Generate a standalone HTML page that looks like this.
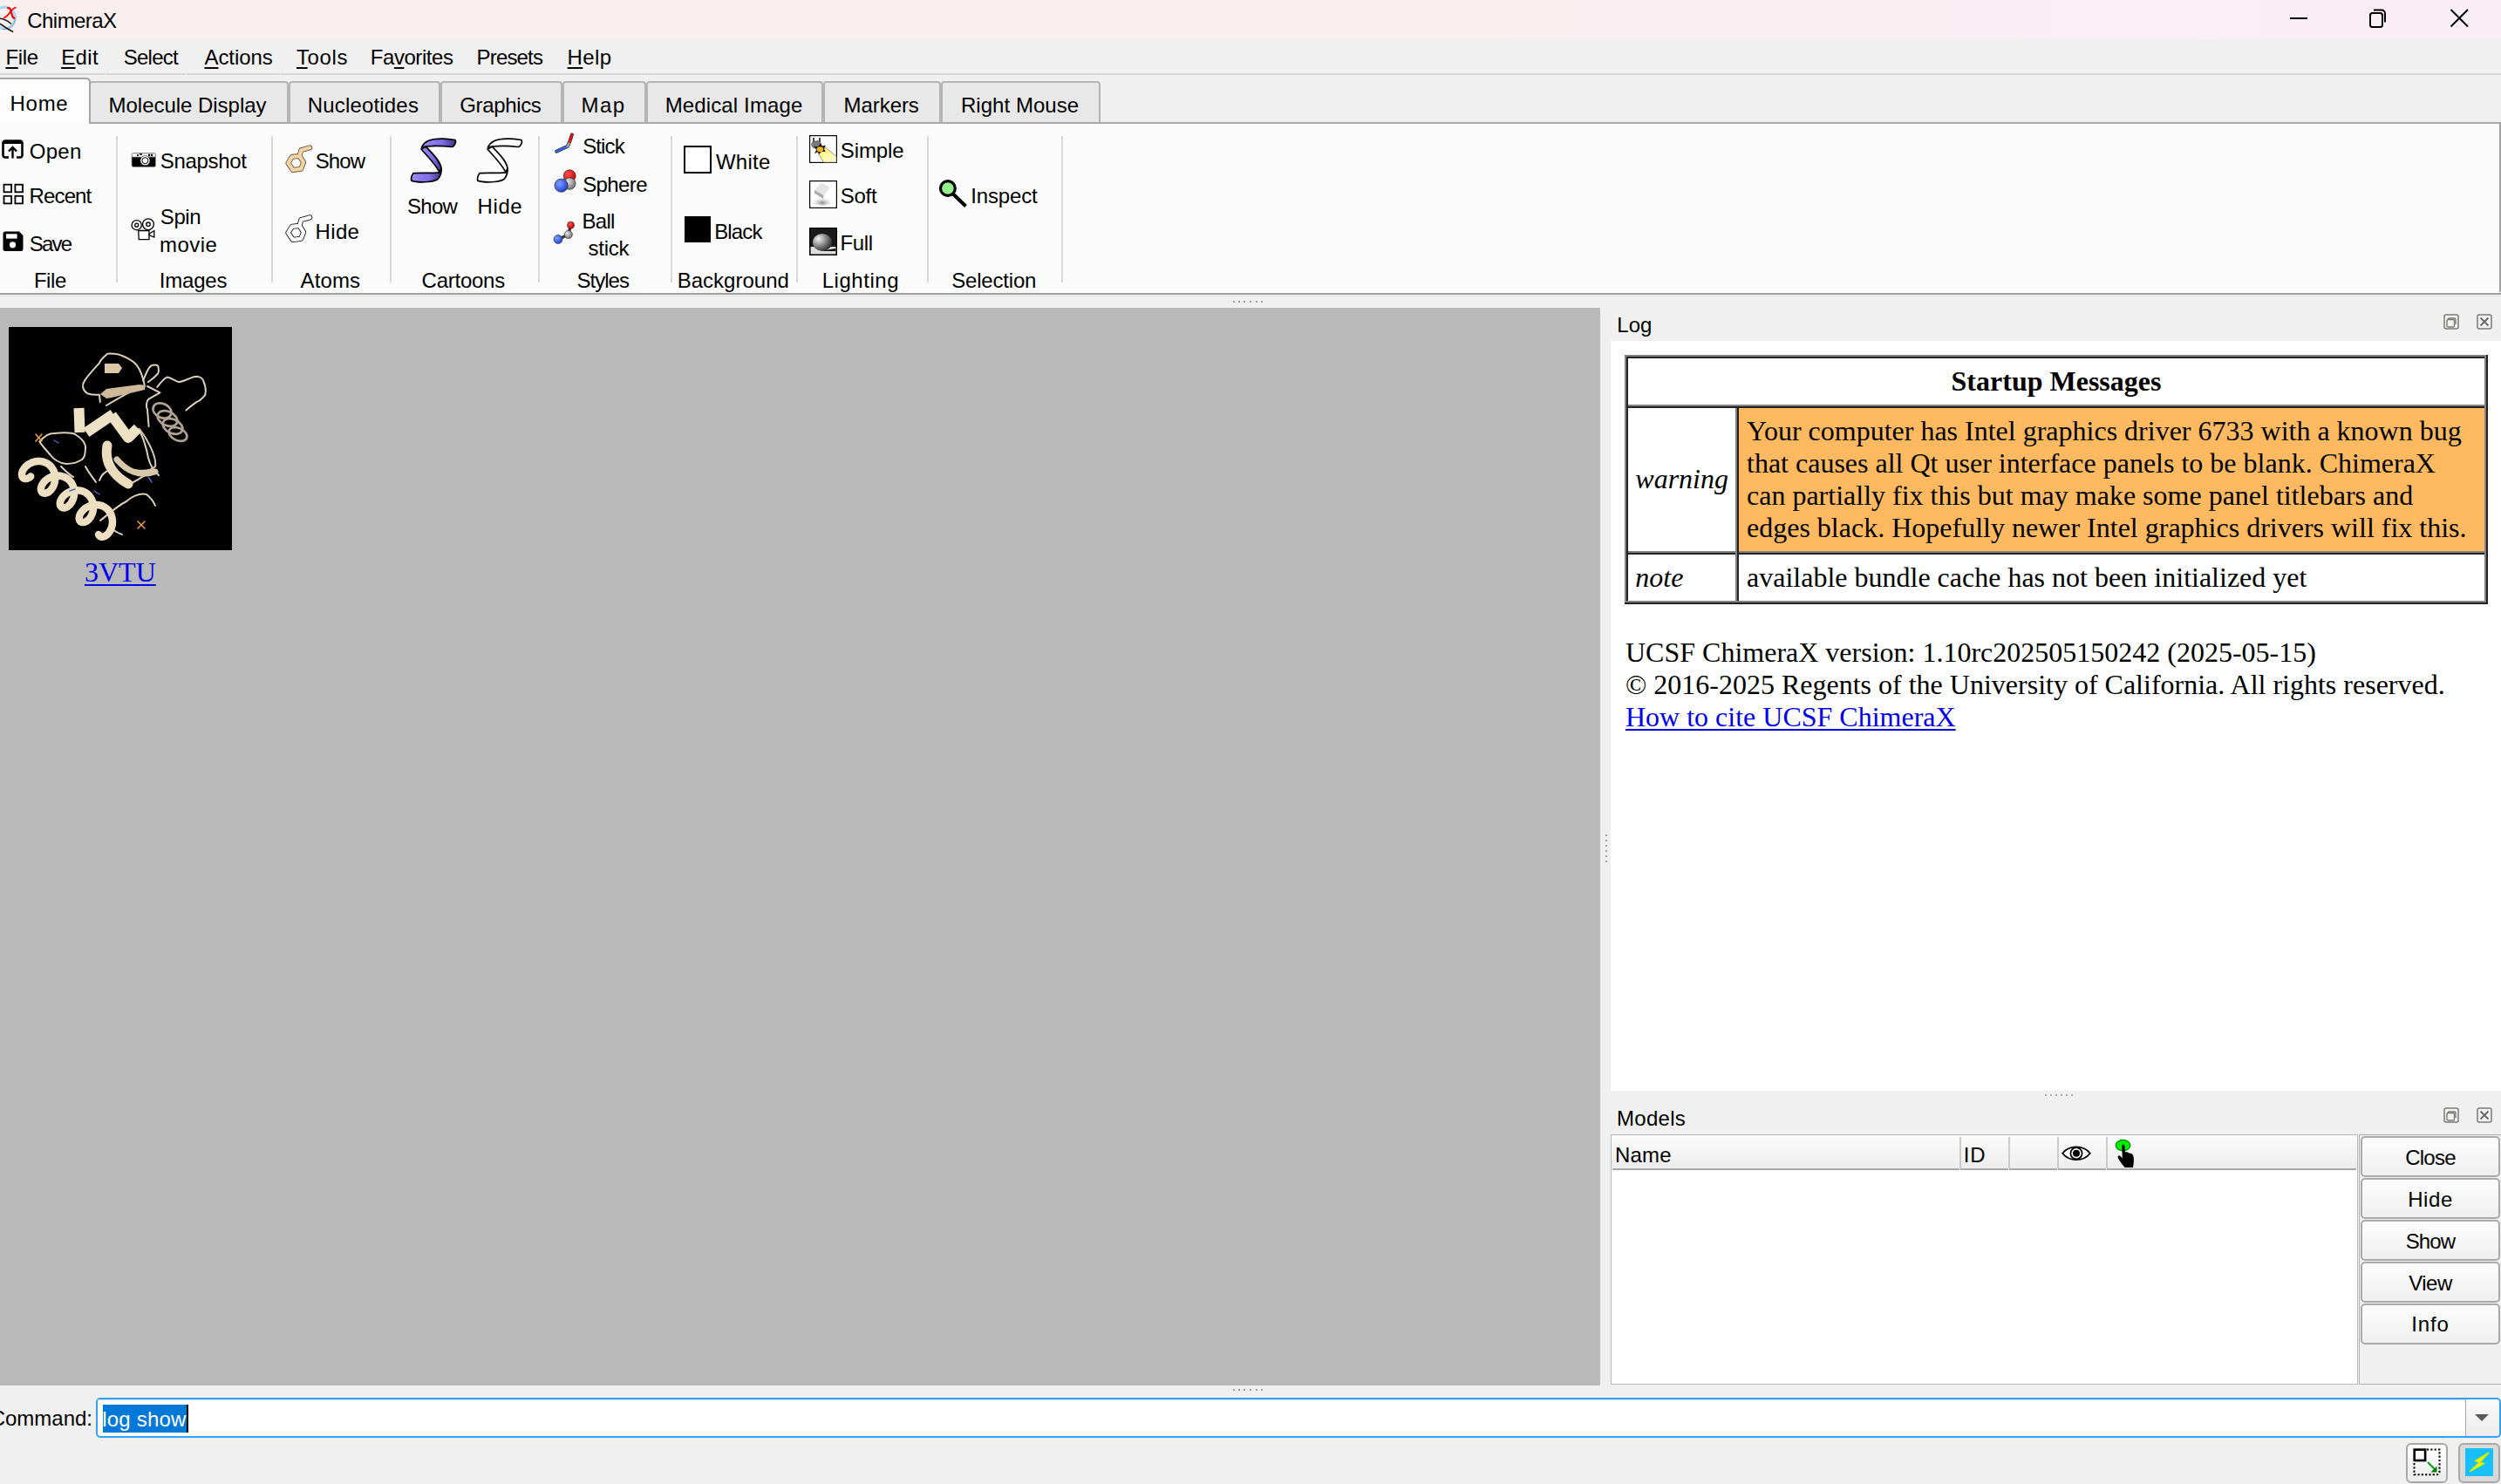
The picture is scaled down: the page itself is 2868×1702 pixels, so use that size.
<!DOCTYPE html>
<html><head><meta charset="utf-8"><title>ChimeraX</title>
<style>
html,body{margin:0;padding:0;width:2868px;height:1702px;overflow:hidden;background:#f0f0f0}
body>div,body>svg{position:absolute}
.t{position:absolute;line-height:1;white-space:nowrap;color:#000}
u{text-decoration:underline;text-decoration-thickness:2px;text-underline-offset:3px}
</style></head><body>
<div style="left:0px;top:0px;width:2868px;height:45px;background:linear-gradient(90deg,#f9efee 0%,#f9eff0 50%,#f9eef5 100%)"></div><svg style="position:absolute;left:0px;top:0px;overflow:visible" width="30" height="45" viewBox="0 0 30 45">
<circle cx="5" cy="20.5" r="12.4" fill="none" stroke="#a9d8f2" stroke-width="3.2"/>
<path d="M17.2 19.3 A12.6 12.6 0 0 1 3 33.5" fill="none" stroke="#6d7b84" stroke-width="0.8" opacity="0.7"/>
<path d="M0 21.3 C5 21.5 9 24 13 27.5" fill="none" stroke="#1a1a1a" stroke-width="1.6"/>
<path d="M0 27.2 C4 30 9 33.5 15.2 36.6" fill="none" stroke="#1a1a1a" stroke-width="1.6"/>
<path d="M4.2 20.6 C7.5 19.5 10 16.5 12.3 13 C14.5 10 16 8.8 18.5 8.5" fill="none" stroke="#f00" stroke-width="1.7"/>
<path d="M8.2 9.4 C10 8.8 11.3 9.2 11.9 11 L14.4 19 C15 20.4 16 20.9 17 20.8" fill="none" stroke="#f00" stroke-width="2.3"/>
</svg><div class="t" style="left:31.30px;top:11.60px;font-size:24px;font-family:'Liberation Sans', sans-serif;;letter-spacing:-0.557px">ChimeraX</div><svg style="position:absolute;left:2620px;top:5px;overflow:visible" width="30" height="35" viewBox="0 0 30 35"><line x1="6" y1="16" x2="26" y2="16" stroke="#000" stroke-width="2"/></svg><svg style="position:absolute;left:2710px;top:5px;overflow:visible" width="35" height="35" viewBox="0 0 35 35"><rect x="8" y="10" width="14" height="16" rx="2.5" fill="none" stroke="#000" stroke-width="2"/>
<path d="M12 6.5 h9 a4 4 0 0 1 4 4 v10" fill="none" stroke="#000" stroke-width="2"/></svg><svg style="position:absolute;left:2805px;top:5px;overflow:visible" width="35" height="35" viewBox="0 0 35 35"><path d="M5.5 6 L25 25.5 M25 6 L5.5 25.5" stroke="#000" stroke-width="1.9"/></svg><div style="left:0px;top:45px;width:2868px;height:97px;background:#f0f0f0"></div><div style="left:0px;top:84px;width:2868px;height:2px;background:#d6d6d6"></div><div style="left:121px;top:84px;width:1px;height:2px;background:#efefef"></div><div style="left:213px;top:84px;width:1px;height:2px;background:#efefef"></div><div style="left:321px;top:84px;width:1px;height:2px;background:#efefef"></div><div class="t" style="left:6.40px;top:53.60px;font-size:24px;font-family:'Liberation Sans', sans-serif;;letter-spacing:-0.333px"><u>F</u>ile</div><div class="t" style="left:70.20px;top:53.60px;font-size:24px;font-family:'Liberation Sans', sans-serif;;letter-spacing:0.333px"><u>E</u>dit</div><div class="t" style="left:141.70px;top:53.60px;font-size:24px;font-family:'Liberation Sans', sans-serif;;letter-spacing:-0.740px">Select</div><div class="t" style="left:234.50px;top:53.60px;font-size:24px;font-family:'Liberation Sans', sans-serif;;letter-spacing:-0.083px"><u>A</u>ctions</div><div class="t" style="left:340.00px;top:53.60px;font-size:24px;font-family:'Liberation Sans', sans-serif;;letter-spacing:0.600px"><u>T</u>ools</div><div class="t" style="left:424.80px;top:53.60px;font-size:24px;font-family:'Liberation Sans', sans-serif;;letter-spacing:-0.450px">Fa<u>v</u>orites</div><div class="t" style="left:546.60px;top:53.60px;font-size:24px;font-family:'Liberation Sans', sans-serif;;letter-spacing:-0.833px">Presets</div><div class="t" style="left:650.60px;top:53.60px;font-size:24px;font-family:'Liberation Sans', sans-serif;;letter-spacing:0.400px"><u>H</u>elp</div><div style="left:102px;top:93px;width:229px;height:49px;background:#e8e8e8;border:2px solid #b4b4b4;border-bottom:none;border-radius:4px 4px 0 0;box-sizing:border-box"></div><div class="t" style="left:124.60px;top:108.60px;font-size:24px;font-family:'Liberation Sans', sans-serif;;letter-spacing:-0.033px">Molecule Display</div><div style="left:331px;top:93px;width:174px;height:49px;background:#e8e8e8;border:2px solid #b4b4b4;border-bottom:none;border-radius:4px 4px 0 0;box-sizing:border-box"></div><div class="t" style="left:352.70px;top:108.60px;font-size:24px;font-family:'Liberation Sans', sans-serif;;letter-spacing:0.180px">Nucleotides</div><div style="left:505px;top:93px;width:140px;height:49px;background:#e8e8e8;border:2px solid #b4b4b4;border-bottom:none;border-radius:4px 4px 0 0;box-sizing:border-box"></div><div class="t" style="left:527.30px;top:108.60px;font-size:24px;font-family:'Liberation Sans', sans-serif;;letter-spacing:-0.357px">Graphics</div><div style="left:645px;top:93px;width:96px;height:49px;background:#e8e8e8;border:2px solid #b4b4b4;border-bottom:none;border-radius:4px 4px 0 0;box-sizing:border-box"></div><div class="t" style="left:666.60px;top:108.60px;font-size:24px;font-family:'Liberation Sans', sans-serif;;letter-spacing:1.400px">Map</div><div style="left:741px;top:93px;width:203px;height:49px;background:#e8e8e8;border:2px solid #b4b4b4;border-bottom:none;border-radius:4px 4px 0 0;box-sizing:border-box"></div><div class="t" style="left:762.70px;top:108.60px;font-size:24px;font-family:'Liberation Sans', sans-serif;;letter-spacing:0.133px">Medical Image</div><div style="left:944px;top:93px;width:135px;height:49px;background:#e8e8e8;border:2px solid #b4b4b4;border-bottom:none;border-radius:4px 4px 0 0;box-sizing:border-box"></div><div class="t" style="left:967.50px;top:108.60px;font-size:24px;font-family:'Liberation Sans', sans-serif;;letter-spacing:-0.050px">Markers</div><div style="left:1079px;top:93px;width:183px;height:49px;background:#e8e8e8;border:2px solid #b4b4b4;border-bottom:none;border-radius:4px 4px 0 0;box-sizing:border-box"></div><div class="t" style="left:1101.90px;top:108.60px;font-size:24px;font-family:'Liberation Sans', sans-serif;;letter-spacing:0.050px">Right Mouse</div><div style="left:102px;top:140px;width:2766px;height:2px;background:#a9a9a9"></div><div style="left:0px;top:89px;width:104px;height:53px;background:#fdfdfd;border:2px solid #a6a6a6;border-left:none;border-bottom:none;border-radius:0 5px 0 0;box-sizing:border-box"></div><div class="t" style="left:11.50px;top:106.60px;font-size:24px;font-family:'Liberation Sans', sans-serif;;letter-spacing:0.733px">Home</div><div style="left:0px;top:142px;width:2868px;height:196px;background:#fbfbfb"></div><div style="left:2866px;top:140px;width:2px;height:198px;background:#a3a3a3"></div><div style="left:0px;top:335px;width:2868px;height:1px;background:#ffffff"></div><div style="left:0px;top:336px;width:2868px;height:2px;background:#a3a3a3"></div><div style="left:133px;top:156px;width:2px;height:168px;background:#d9d9d9"></div><div style="left:311px;top:156px;width:2px;height:168px;background:#d9d9d9"></div><div style="left:447px;top:156px;width:2px;height:168px;background:#d9d9d9"></div><div style="left:617px;top:156px;width:2px;height:168px;background:#d9d9d9"></div><div style="left:769px;top:156px;width:2px;height:168px;background:#d9d9d9"></div><div style="left:913px;top:156px;width:2px;height:168px;background:#d9d9d9"></div><div style="left:1063px;top:156px;width:2px;height:168px;background:#d9d9d9"></div><div style="left:1217px;top:156px;width:2px;height:168px;background:#d9d9d9"></div><div class="t" style="left:38.90px;top:310.10px;font-size:24px;font-family:'Liberation Sans', sans-serif;;letter-spacing:-0.433px">File</div><div class="t" style="left:182.70px;top:310.10px;font-size:24px;font-family:'Liberation Sans', sans-serif;;letter-spacing:-0.180px">Images</div><div class="t" style="left:344.60px;top:310.10px;font-size:24px;font-family:'Liberation Sans', sans-serif;;letter-spacing:0.100px">Atoms</div><div class="t" style="left:483.60px;top:310.10px;font-size:24px;font-family:'Liberation Sans', sans-serif;;letter-spacing:-0.257px">Cartoons</div><div class="t" style="left:661.60px;top:310.10px;font-size:24px;font-family:'Liberation Sans', sans-serif;;letter-spacing:-1.000px">Styles</div><div class="t" style="left:776.70px;top:310.10px;font-size:24px;font-family:'Liberation Sans', sans-serif;;letter-spacing:0.011px">Background</div><div class="t" style="left:942.70px;top:310.10px;font-size:24px;font-family:'Liberation Sans', sans-serif;;letter-spacing:0.543px">Lighting</div><div class="t" style="left:1091.20px;top:310.10px;font-size:24px;font-family:'Liberation Sans', sans-serif;;letter-spacing:-0.188px">Selection</div><svg style="position:absolute;left:2px;top:160px;overflow:visible" width="26" height="24" viewBox="0 0 26 24"><path d="M8 20.5 H4 a2.5 2.5 0 0 1 -2.5 -2.5 V4 a2.5 2.5 0 0 1 2.5 -2.5 H21 a2.5 2.5 0 0 1 2.5 2.5 V18 a2.5 2.5 0 0 1 -2.5 2.5 H17" fill="none" stroke="#000" stroke-width="2.6"/>
<rect x="1.5" y="1.5" width="22" height="3.5" fill="#000"/>
<path d="M12.5 21.5 V9.5 M8 13.5 L12.5 9 L17 13.5" fill="none" stroke="#000" stroke-width="2.4"/></svg><div class="t" style="left:33.80px;top:161.60px;font-size:24px;font-family:'Liberation Sans', sans-serif;;letter-spacing:0.267px">Open</div><svg style="position:absolute;left:2px;top:210px;overflow:visible" width="26" height="26" viewBox="0 0 26 26"><g fill="none" stroke="#000" stroke-width="1.8"><rect x="2.5" y="1.7" width="8.6" height="8.6"/><rect x="15.4" y="1.7" width="8.6" height="8.6"/><rect x="2.5" y="14.8" width="8.6" height="8.6"/><rect x="15.4" y="14.8" width="8.6" height="8.6"/></g></svg><div class="t" style="left:33.60px;top:213.30px;font-size:24px;font-family:'Liberation Sans', sans-serif;;letter-spacing:-0.880px">Recent</div><svg style="position:absolute;left:2px;top:264px;overflow:visible" width="26" height="26" viewBox="0 0 26 26"><path d="M4 1.5 H20 L24.5 6 V21.5 a2.5 2.5 0 0 1 -2.5 2.5 H4 a2.5 2.5 0 0 1 -2.5 -2.5 V4 a2.5 2.5 0 0 1 2.5 -2.5 Z" fill="#000"/>
<rect x="5" y="4.3" width="12.6" height="5.3" fill="#fff"/><circle cx="12.5" cy="16.8" r="3.6" fill="#fff"/></svg><div class="t" style="left:33.80px;top:267.60px;font-size:24px;font-family:'Liberation Sans', sans-serif;;letter-spacing:-1.767px">Save</div><svg style="position:absolute;left:149px;top:173px;overflow:visible" width="31" height="20" viewBox="0 0 31 20"><path d="M2 6 C2 3 3 2.5 6 2.5 H27 C29 2.5 29.5 3.5 29.5 6 V16.5 C29.5 18 28.5 18.5 27 18.5 H4 C2.5 18.5 2 17.5 2 16 Z" fill="#000" stroke="#999" stroke-width="0.8"/>
<path d="M2.4 3 H29 V7 H2.4 Z" fill="#fff" stroke="#999" stroke-width="0.7"/>
<rect x="8" y="4.3" width="2" height="1.6" fill="#000"/><rect x="11" y="3.2" width="3" height="1.5" fill="#000"/><rect x="21" y="3.8" width="2.2" height="2.4" fill="#000"/><rect x="24" y="3.8" width="2.2" height="2.4" fill="#000"/>
<circle cx="17.4" cy="11.2" r="5.6" fill="#fff" stroke="#000" stroke-width="0.6"/><circle cx="17.4" cy="11.2" r="3.5" fill="#fff" stroke="#000" stroke-width="1"/></svg><div class="t" style="left:183.80px;top:173.10px;font-size:24px;font-family:'Liberation Sans', sans-serif;;letter-spacing:-0.343px">Snapshot</div><svg style="position:absolute;left:149px;top:249px;overflow:visible" width="30" height="28" viewBox="0 0 30 28"><g fill="#fff" stroke="#000" stroke-width="1.3"><circle cx="7.7" cy="9.2" r="5.6"/><circle cx="7.7" cy="9.2" r="2"/><circle cx="21" cy="8.2" r="6.4"/><circle cx="21" cy="8.2" r="2.2"/>
<path d="M9.7 15.5 H22 V25.7 H10.3 Z"/><path d="M22 19.3 L27.8 15.6 V23 L22 20.5 Z"/></g></svg><div class="t" style="left:183.80px;top:237.10px;font-size:24px;font-family:'Liberation Sans', sans-serif;;letter-spacing:-0.400px">Spin</div><div class="t" style="left:183.10px;top:268.80px;font-size:24px;font-family:'Liberation Sans', sans-serif;;letter-spacing:0.425px">movie</div><svg style="position:absolute;left:322px;top:160px;overflow:visible" width="40" height="40" viewBox="0 0 40 40"><path d="M8.4 27 L13 19.8 L21.5 19 L26.1 26.1 L23.2 33.7 L13.9 35 Z M21.5 19 L23.2 12.2 L33.3 9.3" fill="none" stroke="#6b5a3f" stroke-width="6" stroke-linejoin="round" stroke-linecap="round"/>
<path d="M8.4 27 L13 19.8 L21.5 19 L26.1 26.1 L23.2 33.7 L13.9 35 Z M21.5 19 L23.2 12.2 L33.3 9.3" fill="none" stroke="#f2d5a5" stroke-width="4.2" stroke-linejoin="round" stroke-linecap="round"/></svg><div class="t" style="left:361.70px;top:173.10px;font-size:24px;font-family:'Liberation Sans', sans-serif;;letter-spacing:-0.900px">Show</div><svg style="position:absolute;left:322px;top:240px;overflow:visible" width="40" height="40" viewBox="0 0 40 40"><path d="M8.4 27 L13 19.8 L21.5 19 L26.1 26.1 L23.2 33.7 L13.9 35 Z M21.5 19 L23.2 12.2 L33.3 9.3" fill="none" stroke="#000" stroke-width="6" stroke-linejoin="round" stroke-linecap="round"/>
<path d="M8.4 27 L13 19.8 L21.5 19 L26.1 26.1 L23.2 33.7 L13.9 35 Z M21.5 19 L23.2 12.2 L33.3 9.3" fill="none" stroke="#fbfbfb" stroke-width="4.4" stroke-linejoin="round" stroke-linecap="round"/></svg><div class="t" style="left:361.50px;top:253.60px;font-size:24px;font-family:'Liberation Sans', sans-serif;;letter-spacing:0.367px">Hide</div><svg style="position:absolute;left:465px;top:150px;overflow:visible" width="60" height="62" viewBox="0 0 60 62"><defs><linearGradient id="pg" x1="0" y1="0" x2="1" y2="0"><stop offset="0" stop-color="#9d8cf6"/><stop offset="0.6" stop-color="#7f6ce8"/><stop offset="1" stop-color="#3f3383"/></linearGradient></defs><g fill="url(#pg)" stroke="#000" stroke-width="1.7" stroke-linejoin="round"><path d="M18.5 19 C22 10 35 7 57 10.5 L57.5 13 C56.5 16.5 55.5 18.5 53 18.5 C45 17.5 30 17.3 23.5 18 Z" />
<path d="M18 21 L23.5 18.2 C31 26 40 35 41 43 L39 48 C36 40 25 29 18 21 Z"/>
<path d="M39.2 47.8 C30 49 15 48 9 48.7 C7 51 6.3 54 6.7 57.1 C12 59.2 30 60 37 55.5 C40 52.5 41.6 47 41 43 Z"/></g></svg><svg style="position:absolute;left:541px;top:150px;overflow:visible" width="60" height="62" viewBox="0 0 60 62"><g fill="#fff" stroke="#000" stroke-width="1.7" stroke-linejoin="round"><path d="M18.5 19 C22 10 35 7 57 10.5 L57.5 13 C56.5 16.5 55.5 18.5 53 18.5 C45 17.5 30 17.3 23.5 18 Z" />
<path d="M18 21 L23.5 18.2 C31 26 40 35 41 43 L39 48 C36 40 25 29 18 21 Z"/>
<path d="M39.2 47.8 C30 49 15 48 9 48.7 C7 51 6.3 54 6.7 57.1 C12 59.2 30 60 37 55.5 C40 52.5 41.6 47 41 43 Z"/></g></svg><div class="t" style="left:467.00px;top:225.00px;font-size:24px;font-family:'Liberation Sans', sans-serif;;letter-spacing:-0.733px">Show</div><div class="t" style="left:547.60px;top:225.00px;font-size:24px;font-family:'Liberation Sans', sans-serif;;letter-spacing:0.567px">Hide</div><svg style="position:absolute;left:630px;top:150px;overflow:visible" width="35" height="135" viewBox="0 0 35 135"><g stroke-linecap="round">
<path d="M8.2 23.6 L20.9 17.7 L23.2 12.7 L25.9 4.5" fill="none" stroke="#333" stroke-width="4"/>
<path d="M8.2 23.6 L20.9 17.7" stroke="#3a62e8" stroke-width="2.6"/>
<path d="M20.9 17.7 L23.2 12.7" stroke="#a0a0a0" stroke-width="2.6"/>
<path d="M23.2 12.7 L25.9 4.5" stroke="#ee1010" stroke-width="2.6"/></g>
<defs><radialGradient id="gb" cx="0.35" cy="0.35" r="0.7"><stop offset="0" stop-color="#7fa0ff"/><stop offset="1" stop-color="#1f3fd0"/></radialGradient>
<radialGradient id="gr" cx="0.35" cy="0.35" r="0.7"><stop offset="0" stop-color="#ff5050"/><stop offset="1" stop-color="#d00000"/></radialGradient>
<radialGradient id="gg" cx="0.35" cy="0.35" r="0.7"><stop offset="0" stop-color="#e6e6e6"/><stop offset="1" stop-color="#707070"/></radialGradient></defs>
<circle cx="23.2" cy="51.8" r="7" fill="url(#gr)" stroke="#222" stroke-width="0.7"/>
<circle cx="23.2" cy="60.5" r="6.8" fill="url(#gg)" stroke="#222" stroke-width="0.7"/>
<circle cx="13.6" cy="62.7" r="7.6" fill="url(#gb)" stroke="#222" stroke-width="0.7"/>
<path d="M10 124.5 L21.8 119 L24.5 108.2" fill="none" stroke="#333" stroke-width="3.2"/>
<circle cx="24.5" cy="108.2" r="4" fill="url(#gr)" stroke="#222" stroke-width="0.6"/>
<circle cx="21.8" cy="119" r="4.6" fill="url(#gg)" stroke="#222" stroke-width="0.6"/>
<circle cx="10" cy="124.5" r="5" fill="url(#gb)" stroke="#222" stroke-width="0.6"/></svg><div class="t" style="left:668.20px;top:155.60px;font-size:24px;font-family:'Liberation Sans', sans-serif;;letter-spacing:-0.875px">Stick</div><div class="t" style="left:668.20px;top:200.10px;font-size:24px;font-family:'Liberation Sans', sans-serif;;letter-spacing:-0.600px">Sphere</div><div class="t" style="left:667.50px;top:242.30px;font-size:24px;font-family:'Liberation Sans', sans-serif;;letter-spacing:-0.700px">Ball</div><div class="t" style="left:674.60px;top:273.20px;font-size:24px;font-family:'Liberation Sans', sans-serif;;letter-spacing:-0.275px">stick</div><div style="left:784px;top:167px;width:32px;height:32px;background:#fff;border:2px solid #000;box-sizing:border-box"></div><div class="t" style="left:820.90px;top:173.60px;font-size:24px;font-family:'Liberation Sans', sans-serif;;letter-spacing:0.275px">White</div><div style="left:785px;top:248px;width:30px;height:30px;background:#000"></div><div class="t" style="left:819.20px;top:253.60px;font-size:24px;font-family:'Liberation Sans', sans-serif;;letter-spacing:-0.850px">Black</div><svg style="position:absolute;left:928px;top:155px;overflow:visible" width="32" height="32" viewBox="0 0 32 32"><rect x="0.6" y="0.6" width="30.8" height="30.8" fill="#fff" stroke="#000" stroke-width="1.2"/>
<defs><linearGradient id="ly" x1="0" y1="0" x2="1" y2="1"><stop offset="0" stop-color="#fff060"/><stop offset="1" stop-color="#fffde0"/></linearGradient></defs>
<path d="M9.4 19.3 L18.5 14.3 L31.2 24.4 V31.2 H16.5 Z" fill="url(#ly)" stroke="#333" stroke-width="0.5"/>
<path d="M5 3 V9 M12 3 V8.5" stroke="#222" stroke-width="1.6"/>
<path d="M3 9 C2 11 3 14 6 15 L14 12 L12.5 7 C9 6 5 7 3 9 Z" fill="#7a7a7a" stroke="#333" stroke-width="0.5"/>
<path d="M6 21.5 L8 17 L5.5 13 L10 13 L13 9.5 L15 12.5 L19 11.5 L17 15.5 L18.5 19 L14 19 L11 22 L10 19 Z" fill="#1a1a1a"/>
<ellipse cx="12.4" cy="16.3" rx="3.8" ry="3" fill="#f5b21c"/></svg><div class="t" style="left:963.80px;top:161.40px;font-size:24px;font-family:'Liberation Sans', sans-serif;;letter-spacing:-0.120px">Simple</div><svg style="position:absolute;left:928px;top:207px;overflow:visible" width="32" height="32" viewBox="0 0 32 32"><defs><radialGradient id="sh" cx="0.5" cy="0.75" r="0.5"><stop offset="0" stop-color="#888"/><stop offset="1" stop-color="#fff" stop-opacity="0"/></radialGradient></defs>
<rect x="0.6" y="0.6" width="30.8" height="30.8" fill="#fff" stroke="#000" stroke-width="1.2"/>
<ellipse cx="15" cy="22" rx="14" ry="7" fill="url(#sh)"/>
<path d="M6 11 L14 2.5 L24 8 L16.5 17 Z" fill="#e4e4e4"/>
<path d="M6 11 L16.5 17 L16 21 L6 14.5 Z" fill="#aaa"/></svg><div class="t" style="left:963.80px;top:213.30px;font-size:24px;font-family:'Liberation Sans', sans-serif;;letter-spacing:-0.300px">Soft</div><svg style="position:absolute;left:928px;top:261px;overflow:visible" width="32" height="32" viewBox="0 0 32 32"><defs><radialGradient id="ap" cx="0.3" cy="0.3" r="0.8"><stop offset="0" stop-color="#f4f4f4"/><stop offset="0.5" stop-color="#888"/><stop offset="1" stop-color="#222"/></radialGradient></defs>
<rect x="0.6" y="0.6" width="30.8" height="30.8" fill="#1a1a1a" stroke="#000" stroke-width="1.2"/>
<path d="M1.6 22 H30.4 V30.4 H1.6 Z" fill="#ddd"/>
<path d="M12 27 L30.4 27 V24 Z" fill="#111"/>
<ellipse cx="15" cy="17" rx="11" ry="10" fill="url(#ap)"/></svg><div class="t" style="left:963.50px;top:267.20px;font-size:24px;font-family:'Liberation Sans', sans-serif;;letter-spacing:-0.333px">Full</div><svg style="position:absolute;left:1076px;top:205px;overflow:visible" width="36" height="36" viewBox="0 0 36 36"><circle cx="10.9" cy="11" r="8.4" fill="#93f28f" stroke="#000" stroke-width="3.2"/>
<path d="M17 17.5 L31.5 31.5" stroke="#000" stroke-width="4"/></svg><div class="t" style="left:1113.20px;top:213.30px;font-size:24px;font-family:'Liberation Sans', sans-serif;;letter-spacing:-0.133px">Inspect</div><div style="left:0px;top:338px;width:2868px;height:15px;background:#f0f0f0"></div><div style="left:0px;top:339px;width:2868px;height:1px;background:#e2e2e2"></div><div style="left:1414px;top:345px;width:2px;height:2px;background:#a0a0a0"></div><div style="left:1420px;top:345px;width:2px;height:2px;background:#a0a0a0"></div><div style="left:1426px;top:345px;width:2px;height:2px;background:#a0a0a0"></div><div style="left:1433px;top:345px;width:2px;height:2px;background:#a0a0a0"></div><div style="left:1440px;top:345px;width:2px;height:2px;background:#a0a0a0"></div><div style="left:1446px;top:345px;width:2px;height:2px;background:#a0a0a0"></div><div style="left:0px;top:353px;width:1835px;height:1236px;background:#b9b9b9"></div><div style="left:1835px;top:353px;width:1033px;height:1236px;background:#f0f0f0"></div><div style="left:1841px;top:957px;width:2px;height:2px;background:#a0a0a0"></div><div style="left:1841px;top:963px;width:2px;height:2px;background:#a0a0a0"></div><div style="left:1841px;top:969px;width:2px;height:2px;background:#a0a0a0"></div><div style="left:1841px;top:975px;width:2px;height:2px;background:#a0a0a0"></div><div style="left:1841px;top:981px;width:2px;height:2px;background:#a0a0a0"></div><div style="left:1841px;top:987px;width:2px;height:2px;background:#a0a0a0"></div><svg style="position:absolute;left:10px;top:375px;overflow:visible" width="256" height="256" viewBox="0 0 256 256"><rect width="256" height="256" fill="#000"/>
<g fill="none" stroke-linecap="round" stroke-linejoin="round">
<g stroke="#ddd0b8" stroke-width="2">
<path d="M155.7 66.5 C154 58 150 48 146.8 43.8 C142 38 128 31 122.6 30.9 C118 30.5 114 30 112.9 30.9 C108 35 104 40 104 41.4 C100 46 92 54 87 61.6 C84 66 84 72 90.2 76.2 C95 78 100 78 104 77.8 L104.8 85.9"/>
<path d="M154.1 61.6 C157 54 160 47 163 44.6 C166 43 170 43 171.1 44.6 C172 48 172 52 171.1 53.5 C168 57 163 61 159.8 63.2"/>
<path d="M159 68 L173.5 75.4 L160.6 82.6 C158 85 157 90 159 95 L160.6 114"/>
<path d="M170.3 68.9 C174 64 178 59 181.6 57.6 C186 58 190 62 195.4 63.2 C202 62 210 57 215.6 56.8 C220 57 223 60 223.7 63.2 C226 68 226 74 225.3 77.8 C222 82 218 85 215.6 85.9 C210 90 206 93 203.4 95.6"/>
<path d="M112 90 C125 82 140 74 150.9 68.1"/>
<path d="M35.4 131.5 C40 126 46 122 52 122 C62 121 72 121 76 123 C84 128 88 133 88 138 C88 145 87 150 84 152 C78 156 72 157 66 157 C56 156 50 150 47 146 C42 140 38 136 35.4 131.5"/>
<path d="M105 222 C115 214 125 205 135 200 C140 195 150 190 158 192 C163 196 166 200 168 205"/>
<path d="M148 117 C155 125 158 140 160 150 C162 158 166 165 172 170"/>
<path d="M138 180 C145 178 152 172 160 168"/>
<path d="M88 160 C92 168 96 172 100 178 M104 176 C106 170 110 166 116 164"/>
<path d="M60 160 C66 166 70 170 74 172 M116 230 C120 233 124 236 130 238"/>
</g>
<g stroke="#b0a494" stroke-width="2.6">
<ellipse cx="176" cy="96" rx="11" ry="8" transform="rotate(25 176 96)"/>
<ellipse cx="182" cy="105" rx="12" ry="8" transform="rotate(25 182 105)"/>
<ellipse cx="188" cy="114" rx="12" ry="8" transform="rotate(25 188 114)"/>
<ellipse cx="194" cy="123" rx="11" ry="7" transform="rotate(25 194 123)"/>
</g>
<path d="M25.2 171.5 L24.2 172.3 L23.1 173.0 L22.0 173.5 L21.0 173.9 L20.0 174.1 L19.0 174.1 L18.1 173.9 L17.3 173.6 L16.6 173.2 L16.0 172.6 L15.6 171.8 L15.3 171.0 L15.1 170.0 L15.0 169.0 L15.1 167.8 L15.4 166.7 L15.8 165.4 L16.4 164.2 L17.2 163.0 L18.1 161.7 L19.1 160.5 L20.3 159.4 L21.6 158.3 L23.0 157.3 L24.6 156.5 L26.2 155.7 L27.9 155.0 L29.6 154.5 L31.4 154.2 L33.2 154.0 L35.1 154.0 L36.9 154.1 L38.7 154.4 L40.5 154.9 L42.1 155.5 L43.8 156.3 L45.3 157.3 L46.7 158.4 L48.0 159.6 L49.2 161.0 L50.2 162.5 L51.1 164.1 L51.9 165.7 L52.4 167.5 L52.9 169.2 L53.1 171.1 L53.3 172.9 L53.2 174.7 L53.0 176.5 L52.7 178.3 L52.2 180.0 L51.6 181.6 L50.9 183.1 L50.1 184.5 L49.2 185.8 L48.3 187.0 L47.3 188.0 L46.2 188.9 L45.1 189.6 L44.1 190.1 L43.0 190.5 L42.0 190.7 L41.1 190.7 L40.2 190.6 L39.4 190.3 L38.6 189.9 L38.0 189.3 L37.5 188.6 L37.2 187.8 L37.0 186.8 L36.9 185.8 L37.0 184.7 L37.3 183.5 L37.7 182.3 L38.2 181.0 L39.0 179.8 L39.8 178.6 L40.9 177.4 L42.0 176.2 L43.3 175.1 L44.7 174.1 L46.2 173.2 L47.8 172.5 L49.5 171.8 L51.3 171.3 L53.1 170.9 L54.9 170.7 L56.7 170.6 L58.5 170.7 L60.3 171.0 L62.1 171.5 L63.8 172.1 L65.4 172.9 L67.0 173.8 L68.4 174.9 L69.7 176.1 L70.9 177.5 L72.0 178.9 L72.9 180.5 L73.7 182.2 L74.3 183.9 L74.7 185.7 L75.0 187.5 L75.2 189.3 L75.1 191.1 L75.0 192.9 L74.6 194.7 L74.2 196.4 L73.6 198.0 L72.9 199.6 L72.1 201.0 L71.3 202.3 L70.3 203.5 L69.3 204.5 L68.3 205.4 L67.2 206.2 L66.1 206.7 L65.1 207.1 L64.1 207.4 L63.1 207.4 L62.2 207.3 L61.4 207.1 L60.6 206.6 L60.0 206.1 L59.5 205.4 L59.1 204.6 L58.9 203.6 L58.8 202.6 L58.9 201.5 L59.1 200.3 L59.5 199.1 L60.1 197.9 L60.8 196.6 L61.6 195.4 L62.6 194.2 L63.8 193.1 L65.0 192.0 L66.4 190.9 L67.9 190.0 L69.5 189.2 L71.2 188.6 L72.9 188.0 L74.7 187.6 L76.5 187.4 L78.4 187.3 L80.2 187.4 L82.0 187.6 L83.8 188.1 L85.5 188.7 L87.1 189.4 L88.7 190.3 L90.1 191.4 L91.5 192.6 L92.7 193.9 L93.8 195.4 L94.7 196.9 L95.5 198.6 L96.1 200.3 L96.6 202.1 L96.9 203.9 L97.0 205.7 L97.0 207.5 L96.9 209.3 L96.6 211.1 L96.2 212.8 L95.6 214.5 L94.9 216.0 L94.2 217.5 L93.3 218.8 L92.4 220.0 L91.4 221.1 L90.3 222.0 L89.3 222.7 L88.2 223.3 L87.1 223.7 L86.1 224.0 L85.1 224.1 L84.2 224.0 L83.4 223.8 L82.6 223.4 L82.0 222.8 L81.5 222.2 L81.1 221.3 L80.8 220.4 L80.7 219.4 L80.8 218.3 L81.0 217.2 L81.3 216.0 L81.9 214.7 L82.5 213.5 L83.4 212.3 L84.4 211.0 L85.5 209.9 L86.7 208.8 L88.1 207.8 L89.6 206.8 L91.2 206.0 L92.9 205.3 L94.6 204.7 L96.4 204.3 L98.2 204.1 L100.0 204.0 L101.8 204.0 L103.6 204.3 L105.4 204.7 L107.1 205.2 L108.8 206.0 L110.4 206.9 L111.8 207.9 L113.2 209.1 L114.4 210.4 L115.5 211.8 L116.5 213.4 L117.3 215.0 L117.9 216.7 L118.4 218.5 L118.8 220.3 L118.9 222.1 L119.0 223.9 L118.8 225.7 L118.6 227.5 L118.1 229.2 L117.6 230.9 L116.9 232.5 L116.2 233.9 L115.3 235.3 L114.4 236.5 L113.4 237.6 L112.4 238.5 L111.3 239.3 L110.3 239.9 L109.2 240.4 L108.2 240.6 L107.2 240.8 L106.3 240.7 L105.4 240.5 L104.6 240.1 L104.0 239.6 L103.5 238.9 L103.0 238.1" stroke="#eddfc2" stroke-width="8.5"/>
<g stroke="#eee2c6" stroke-width="12" stroke-linecap="butt">
<path d="M80.5 93 L81.5 121"/>
<path d="M89 121 L120 100"/>
<path d="M118 101 L137 127 L148 116"/>
</g>
<path d="M113 136 C110 152 116 168 137 180" stroke="#eadcbf" stroke-width="11"/>
<path d="M124 152 C135 165 150 172 168 166" stroke="#d8c8aa" stroke-width="7"/>
<path d="M150 117 C160 130 170 150 168 160 C160 168 140 165 128 158" stroke="#d6c9b3" stroke-width="2"/>
<path d="M110 42 L126 42 L130 47 L126 53 L110 53 Z" fill="#dcc8a6"/>
<path d="M105 77 L112 71 L150 66 L157 67 L156 72 L118 81 L112 82 Z" fill="#cdb99a"/>
<g stroke="#f0a040" stroke-width="1.5">
<path d="M148 223 L156 231 M156 223 L148 231"/>
<path d="M31 123 L38 131 M38 123 L31 131"/>
</g>
<g stroke="#4a6ad0" stroke-width="1.4">
<path d="M52 130 L57 133 M98 188 L104 192 M160 172 L164 178 M70 188 L76 186"/>
</g>
</g></svg><div class="t" style="left:97.00px;top:640.20px;font-size:32px;font-family:'Liberation Serif', serif;color:#0000ee"><u>3VTU</u></div><div class="t" style="left:1854.20px;top:360.60px;font-size:24px;font-family:'Liberation Sans', sans-serif;;letter-spacing:0.100px">Log</div><svg style="position:absolute;left:2800px;top:358px;overflow:visible" width="22" height="22" viewBox="0 0 22 22"><rect x="3" y="3" width="16" height="16" rx="2" fill="#f3f3f3" stroke="#7a7a78" stroke-width="1.5"/>
<path d="M7 8.5 C7 7.5 7.5 7 8.5 7 H14.5 C15.5 7 16 7.5 16 8.5 V14" fill="none" stroke="#7a7a78" stroke-width="1.4"/>
<rect x="6" y="8.5" width="8.5" height="8.5" rx="1.2" fill="#f3f3f3" stroke="#7a7a78" stroke-width="1.4"/></svg><svg style="position:absolute;left:2838px;top:358px;overflow:visible" width="22" height="22" viewBox="0 0 22 22"><rect x="3" y="3" width="16" height="16" rx="2" fill="#f3f3f3" stroke="#7a7a78" stroke-width="1.5"/>
<path d="M6.5 6.5 L15.5 15.5 M15.5 6.5 L6.5 15.5" stroke="#6c6c68" stroke-width="2"/></svg><div style="left:1847px;top:391px;width:1021px;height:860px;background:#fff"></div><div style="left:1994px;top:468px;width:855px;height:164px;background:#ffb961"></div><div class="t" style="left:1858.0px;width:1000px;text-align:center;top:421.40px;font-size:32px;font-family:'Liberation Serif', serif;font-weight:bold">Startup Messages</div><div class="t" style="left:1875.30px;top:533.20px;font-size:32px;font-family:'Liberation Serif', serif;font-style:italic">warning</div><div class="t" style="left:2003.00px;top:478.20px;font-size:32px;font-family:'Liberation Serif', serif;">Your computer has Intel graphics driver 6733 with a known bug</div><div class="t" style="left:2003.00px;top:515.00px;font-size:32px;font-family:'Liberation Serif', serif;">that causes all Qt user interface panels to be blank. ChimeraX</div><div class="t" style="left:2003.00px;top:551.80px;font-size:32px;font-family:'Liberation Serif', serif;">can partially fix this but may make some panel titlebars and</div><div class="t" style="left:2003.00px;top:588.60px;font-size:32px;font-family:'Liberation Serif', serif;">edges black. Hopefully newer Intel graphics drivers will fix this.</div><div class="t" style="left:1875.30px;top:645.50px;font-size:32px;font-family:'Liberation Serif', serif;font-style:italic">note</div><div class="t" style="left:2003.00px;top:645.50px;font-size:32px;font-family:'Liberation Serif', serif;">available bundle cache has not been initialized yet</div><div style="left:1865px;top:464px;width:984px;height:2px;background:#828282"></div><div style="left:1865px;top:466px;width:984px;height:2px;background:#222222"></div><div style="left:1865px;top:632px;width:984px;height:2px;background:#828282"></div><div style="left:1865px;top:634px;width:984px;height:2px;background:#222222"></div><div style="left:1990px;top:468px;width:2px;height:221px;background:#828282"></div><div style="left:1992px;top:468px;width:2px;height:221px;background:#222222"></div><div style="left:1863px;top:407px;width:990px;height:2px;background:#828282"></div><div style="left:1863px;top:407px;width:2px;height:286px;background:#828282"></div><div style="left:1865px;top:409px;width:986px;height:2px;background:#222222"></div><div style="left:1865px;top:409px;width:2px;height:282px;background:#222222"></div><div style="left:1865px;top:689px;width:986px;height:2px;background:#828282"></div><div style="left:2849px;top:409px;width:2px;height:282px;background:#828282"></div><div style="left:1863px;top:691px;width:990px;height:2px;background:#222222"></div><div style="left:2851px;top:407px;width:2px;height:286px;background:#222222"></div><div class="t" style="left:1864.00px;top:732.00px;font-size:32px;font-family:'Liberation Serif', serif;">UCSF ChimeraX version: 1.10rc202505150242 (2025-05-15)</div><div class="t" style="left:1864.00px;top:768.80px;font-size:32px;font-family:'Liberation Serif', serif;">&copy; 2016-2025 Regents of the University of California. All rights reserved.</div><div class="t" style="left:1864.00px;top:805.60px;font-size:32px;font-family:'Liberation Serif', serif;color:#0000ee"><u>How to cite UCSF ChimeraX</u></div><div style="left:2345px;top:1255px;width:2px;height:2px;background:#a8a8a8"></div><div style="left:2351px;top:1255px;width:2px;height:2px;background:#a8a8a8"></div><div style="left:2357px;top:1255px;width:2px;height:2px;background:#a8a8a8"></div><div style="left:2363px;top:1255px;width:2px;height:2px;background:#a8a8a8"></div><div style="left:2369px;top:1255px;width:2px;height:2px;background:#a8a8a8"></div><div style="left:2375px;top:1255px;width:2px;height:2px;background:#a8a8a8"></div><div class="t" style="left:1854.00px;top:1270.60px;font-size:24px;font-family:'Liberation Sans', sans-serif;;letter-spacing:0.280px">Models</div><svg style="position:absolute;left:2800px;top:1268px;overflow:visible" width="22" height="22" viewBox="0 0 22 22"><rect x="3" y="3" width="16" height="16" rx="2" fill="#f3f3f3" stroke="#7a7a78" stroke-width="1.5"/>
<path d="M7 8.5 C7 7.5 7.5 7 8.5 7 H14.5 C15.5 7 16 7.5 16 8.5 V14" fill="none" stroke="#7a7a78" stroke-width="1.4"/>
<rect x="6" y="8.5" width="8.5" height="8.5" rx="1.2" fill="#f3f3f3" stroke="#7a7a78" stroke-width="1.4"/></svg><svg style="position:absolute;left:2838px;top:1268px;overflow:visible" width="22" height="22" viewBox="0 0 22 22"><rect x="3" y="3" width="16" height="16" rx="2" fill="#f3f3f3" stroke="#7a7a78" stroke-width="1.5"/>
<path d="M6.5 6.5 L15.5 15.5 M15.5 6.5 L6.5 15.5" stroke="#6c6c68" stroke-width="2"/></svg><div style="left:1847px;top:1301px;width:857px;height:287px;background:#fff;border:1px solid #b9b9b9;box-sizing:border-box"></div><div style="left:1848px;top:1302px;width:855px;height:38px;background:linear-gradient(#fbfbfb,#ededed)"></div><div style="left:1849px;top:1340px;width:853px;height:2px;background:#a9a9a9"></div><div style="left:2247px;top:1304px;width:2px;height:36px;background:#cbcbcb"></div><div style="left:2247px;top:1340px;width:1px;height:2px;background:#f5f5f5"></div><div style="left:2303px;top:1304px;width:2px;height:36px;background:#cbcbcb"></div><div style="left:2303px;top:1340px;width:1px;height:2px;background:#f5f5f5"></div><div style="left:2359px;top:1304px;width:2px;height:36px;background:#cbcbcb"></div><div style="left:2359px;top:1340px;width:1px;height:2px;background:#f5f5f5"></div><div style="left:2415px;top:1304px;width:2px;height:36px;background:#cbcbcb"></div><div style="left:2415px;top:1340px;width:1px;height:2px;background:#f5f5f5"></div><div class="t" style="left:1852.00px;top:1312.60px;font-size:24px;font-family:'Liberation Sans', sans-serif;;letter-spacing:0.200px">Name</div><div class="t" style="left:2251.80px;top:1312.60px;font-size:24px;font-family:'Liberation Sans', sans-serif;;letter-spacing:0.900px">ID</div><svg style="position:absolute;left:2362px;top:1310px;overflow:visible" width="38" height="24" viewBox="0 0 38 24"><path d="M3.2 12.8 C11 3 27 3 34.8 12.8 C27 22.6 11 22.6 3.2 12.8 Z" fill="#fff" stroke="#000" stroke-width="1.8"/>
<circle cx="19" cy="12.8" r="6.6" fill="#fff" stroke="#000" stroke-width="1.8"/><circle cx="19" cy="12.8" r="4" fill="#000"/></svg><svg style="position:absolute;left:2420px;top:1304px;overflow:visible" width="34" height="38" viewBox="0 0 34 38"><ellipse cx="14.5" cy="9.6" rx="8.3" ry="6.3" fill="#00ee00" stroke="#009000" stroke-width="1.3"/>
<path d="M13.3 10.5 C13.3 8.3 16.3 8.3 16.4 10.5 L17 17.5 C18.5 16.8 20.5 17.3 21 18.5 C23 18 25.5 19.2 26 21 C27.2 23 27.3 29 26 35 H16.8 C14 32 11.5 28.5 9 24.5 C8.2 22.8 8.8 21 10.6 21.4 C11.8 21.8 12.8 23 13.8 24.5 Z" fill="#000"/></svg><div style="left:2705px;top:1301px;width:163px;height:287px;background:#f0f0f0;border:1px solid #b0b0b0;border-right:none;box-sizing:border-box"></div><div style="left:2707px;top:1303px;width:160px;height:47px;background:linear-gradient(#fdfdfd,#efefef);border:2px solid #aaaaaa;border-radius:5px;box-sizing:border-box"></div><div class="t" style="left:2287px;width:1000px;text-align:center;top:1316.20px;font-size:24px;font-family:'Liberation Sans', sans-serif;;letter-spacing:-0.750px">Close</div><div style="left:2707px;top:1351px;width:160px;height:47px;background:linear-gradient(#fdfdfd,#efefef);border:2px solid #aaaaaa;border-radius:5px;box-sizing:border-box"></div><div class="t" style="left:2287px;width:1000px;text-align:center;top:1364.00px;font-size:24px;font-family:'Liberation Sans', sans-serif;;letter-spacing:0.567px">Hide</div><div style="left:2707px;top:1399px;width:160px;height:47px;background:linear-gradient(#fdfdfd,#efefef);border:2px solid #aaaaaa;border-radius:5px;box-sizing:border-box"></div><div class="t" style="left:2287px;width:1000px;text-align:center;top:1411.80px;font-size:24px;font-family:'Liberation Sans', sans-serif;;letter-spacing:-0.833px">Show</div><div style="left:2707px;top:1447px;width:160px;height:47px;background:linear-gradient(#fdfdfd,#efefef);border:2px solid #aaaaaa;border-radius:5px;box-sizing:border-box"></div><div class="t" style="left:2287px;width:1000px;text-align:center;top:1459.60px;font-size:24px;font-family:'Liberation Sans', sans-serif;;letter-spacing:-0.567px">View</div><div style="left:2707px;top:1495px;width:160px;height:47px;background:linear-gradient(#fdfdfd,#efefef);border:2px solid #aaaaaa;border-radius:5px;box-sizing:border-box"></div><div class="t" style="left:2287px;width:1000px;text-align:center;top:1507.40px;font-size:24px;font-family:'Liberation Sans', sans-serif;;letter-spacing:0.900px">Info</div><div style="left:0px;top:1589px;width:2868px;height:113px;background:#f0f0f0"></div><div style="left:1414px;top:1593px;width:2px;height:2px;background:#a0a0a0"></div><div style="left:1420px;top:1593px;width:2px;height:2px;background:#a0a0a0"></div><div style="left:1426px;top:1593px;width:2px;height:2px;background:#a0a0a0"></div><div style="left:1433px;top:1593px;width:2px;height:2px;background:#a0a0a0"></div><div style="left:1440px;top:1593px;width:2px;height:2px;background:#a0a0a0"></div><div style="left:1446px;top:1593px;width:2px;height:2px;background:#a0a0a0"></div><div class="t" style="left:-394px;width:500px;text-align:right;top:1615.40px;font-size:24px;font-family:'Liberation Sans', sans-serif">Command:</div><div style="left:110px;top:1603px;width:2758px;height:46px;background:#fff;border:2px solid #36a0f7;border-radius:5px;box-sizing:border-box"></div><div style="left:112px;top:1605px;width:2715px;height:1px;background:#d2e0eb"></div><div style="left:118px;top:1611px;width:97px;height:32px;background:#0078d7"></div><div class="t" style="left:117.20px;top:1616.40px;font-size:24px;font-family:'Liberation Sans', sans-serif;color:#fff;letter-spacing:0.200px">log show</div><div style="left:214px;top:1611px;width:2px;height:32px;background:#000"></div><div style="left:2827px;top:1605px;width:39px;height:42px;background:linear-gradient(#fafafa,#ececec);border-left:1px solid #a8a8a8;border-radius:0 4px 4px 0;box-sizing:border-box"></div><svg style="position:absolute;left:2836px;top:1620px;overflow:visible" width="20" height="12" viewBox="0 0 20 12"><path d="M2 2 H18 L10 10 Z" fill="#595959"/></svg><div style="left:2759px;top:1655px;width:48px;height:46px;background:linear-gradient(#ffffff,#ececec);border:2px solid #a8a8a8;border-radius:6px;box-sizing:border-box"></div><svg style="position:absolute;left:2759px;top:1655px;overflow:visible" width="48" height="46" viewBox="0 0 48 46"><rect x="9.7" y="7.6" width="12.4" height="12.4" fill="none" stroke="#000" stroke-width="2.6"/>
<path d="M9.5 23 V36.2 H35.5 a3 3 0 0 0 3 -3 V7.6 H24" fill="none" stroke="#000" stroke-width="2" stroke-dasharray="2.2 2.1"/>
<path d="M25 22 L33 30" stroke="#1a9a1a" stroke-width="2.2"/><path d="M28.5 33.5 L35.5 33.5 L35.5 26.5 Z" fill="#008000"/></svg><div style="left:2819px;top:1655px;width:48px;height:46px;background:#d9d9d9;border:2px solid #a8a8a8;border-radius:6px;box-sizing:border-box"></div><svg style="position:absolute;left:2827px;top:1661px;overflow:visible" width="32" height="32" viewBox="0 0 32 32"><rect width="32" height="32" fill="#18c0ff"/>
<path d="M26.5 5.5 L11.5 14.5 L16.5 16 L5.5 26.5 L21.5 17.5 L16.8 16.2 Z" fill="#f6f600" stroke="#d0f000" stroke-width="1.6" stroke-linejoin="round"/></svg>
</body></html>
